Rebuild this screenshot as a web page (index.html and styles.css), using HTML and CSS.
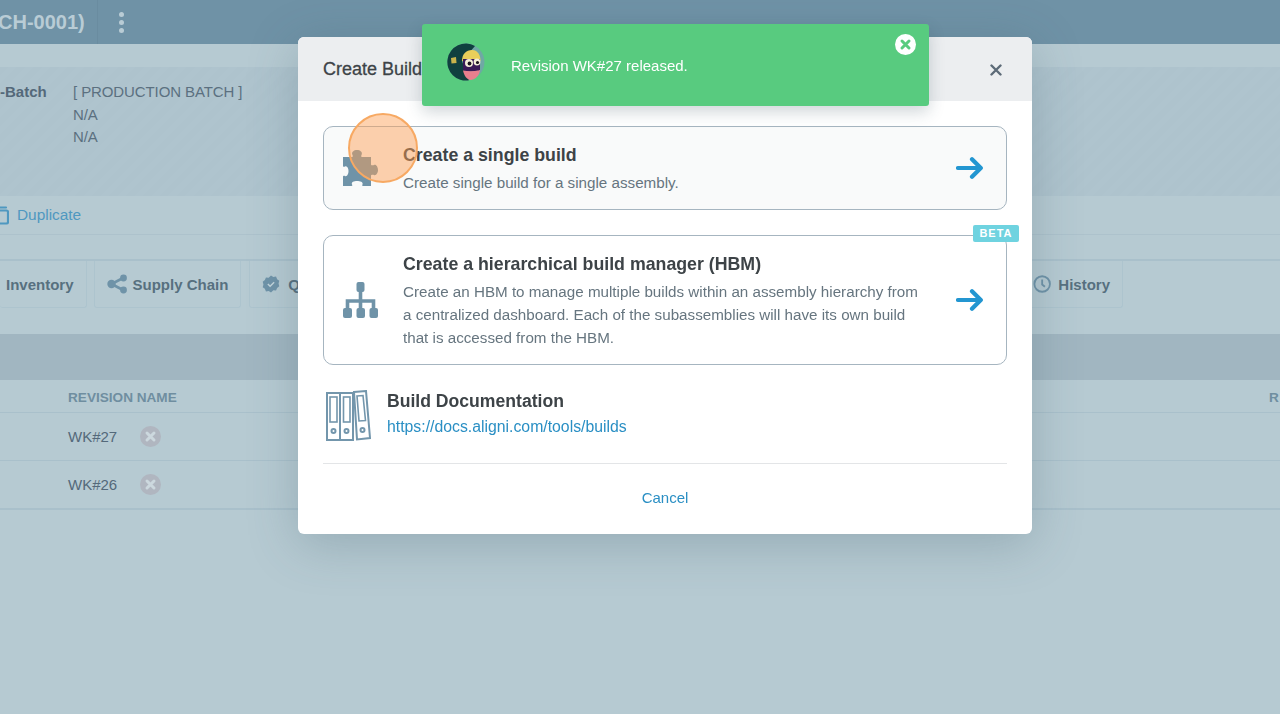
FILE: index.html
```html
<!DOCTYPE html>
<html lang="en">
<head>
    <meta charset="UTF-8">
    <meta name="viewport" content="width=device-width, initial-scale=1.0">
    <link rel="stylesheet" href="styles.css">
    <title>Create Build</title>
</head>
<body>
    <div class="page">
        <header class="topbar">
            <h1 class="part-name">CH-0001)</h1>
            <div class="topbar-menu"><span></span><span></span><span></span></div>
        </header>
        <div class="strip"></div>
        <section class="details">
            <div class="details-label">-Batch</div>
            <div class="details-values">
                <div>[ PRODUCTION BATCH ]</div>
                <div>N/A</div>
                <div>N/A</div>
            </div>
        </section>
        <div class="actions">
            <svg class="duplicate-icon" width="9" height="20" viewBox="4 0 9 20"><path d="M3 2.500h7M1 5.500h9.500a1.500 1.500 0 0 1 1.500 1.500v10a1.500 1.500 0 0 1-1.500 1.500H1" fill="none" stroke="#4f98c0" stroke-width="2.200" stroke-linecap="round"/></svg>
            <a class="duplicate-link">Duplicate</a>
        </div>
        <div class="sub-strip"></div>
        <nav class="tabs">
            <div class="tab tab-first">Inventory</div>
            <div class="tab">
                <svg width="20" height="20" viewBox="0 0 20 20"><path d="M16 4 4.500 10 16 16" fill="none" stroke="#6f93a8" stroke-width="2.600"/><circle cx="16.500" cy="4" r="3.400" fill="#6f93a8"/><circle cx="16.500" cy="16" r="3.400" fill="#6f93a8"/><circle cx="4.500" cy="10" r="4.200" fill="#6f93a8"/></svg>
                Supply Chain
            </div>
            <div class="tab tab-quality">
                <svg width="18" height="18" viewBox="0 0 20 20"><path d="M10 .5l2.600 1.600 3-.3 1.200 2.800 2.400 1.900-.8 3 .8 3-2.400 1.900-1.200 2.800-3-.3L10 19.500l-2.600-1.600-3 .3-1.200-2.800L.8 13.500l.8-3-.8-3 2.400-1.900 1.200-2.800 3 .3z" fill="#6f93a8"/><path d="M6.500 10l2.500 2.500 4.500-4.500" fill="none" stroke="#c4d5dc" stroke-width="1.600"/></svg>
                Quality
            </div>
            <div class="tab tab-history">
                <svg width="20" height="20" viewBox="0 0 20 20"><circle cx="10" cy="10" r="8.500" fill="none" stroke="#6f93a8" stroke-width="2"/><path d="M10 5v5.500l3 2.500" fill="none" stroke="#6f93a8" stroke-width="2"/></svg>
                History
            </div>
        </nav>
        <div class="table-bar"></div>
        <div class="table-row table-head">
            <div></div>
            <div>REVISION NAME</div>
            <div>R</div>
        </div>
        <div class="table-row">
            <div></div>
            <div class="revision">
                WK#27
                <svg width="21" height="21" viewBox="0 0 21 21"><circle cx="10.500" cy="10.500" r="10.500" fill="#b0b6c0"/><path d="M7 7l7 7M14 7l-7 7" stroke="#ccd8de" stroke-width="3" stroke-linecap="round"/></svg>
            </div>
        </div>
        <div class="table-row table-row-last">
            <div></div>
            <div class="revision">
                WK#26
                <svg width="21" height="21" viewBox="0 0 21 21"><circle cx="10.500" cy="10.500" r="10.500" fill="#b0b6c0"/><path d="M7 7l7 7M14 7l-7 7" stroke="#ccd8de" stroke-width="3" stroke-linecap="round"/></svg>
            </div>
        </div>
    </div>

    <div class="modal">
        <div class="modal-header">
            <div class="modal-title">Create Build</div>
            <svg class="modal-close" width="12" height="12" viewBox="0 0 12 12"><path d="M1.500 1.500l9 9M10.500 1.500l-9 9" stroke="#5d6b78" stroke-width="2.400" stroke-linecap="round"/></svg>
        </div>
        <div class="modal-body">
            <div class="option option-single">
                <svg class="option-icon" width="35" height="36" viewBox="0 0 35 36"><path d="M0 7H9C10 7 10 6 9.500 5C8 2 11 0 14 0C17 0 20 2 18.500 5C18 6 18 7 19 7H28V14.500C28 15.500 30 15.500 31 15C33 14 35 17 35 20C35 23 33 26 31 25C30 24.500 28 24.500 28 25.500V36H20C19 36 19 35 19.500 34.500C20.500 32 17 31 14 31C11 31 8 32 9 34.500C9.500 35 9.500 36 8.500 36H0V26.500C0 25.500 1.500 25.500 2 26C4 27 5.500 24 5.500 21C5.500 18 4 15.500 2 16.500C1.500 17 0 17 0 16Z" fill="#6f93a8"/></svg>
                <div class="option-text">
                    <div class="option-title">Create a single build</div>
                    <div class="option-desc">Create single build for a single assembly.</div>
                </div>
                <svg class="option-arrow" width="28" height="24" viewBox="0 0 28 24"><path d="M2 12h22.500M16 3.200 24.800 12 16 20.800" fill="none" stroke="#2396d1" stroke-width="4.200" stroke-linecap="round" stroke-linejoin="round"/></svg>
            </div>
            <div class="option option-hbm">
                <span class="beta">BETA</span>
                <svg class="option-icon" width="35" height="36" viewBox="0 0 35 36"><rect x="13.500" y="0" width="8" height="10" rx="2" fill="#6f93a8"/><rect x="0" y="26" width="9" height="10" rx="2" fill="#6f93a8"/><rect x="13.500" y="26" width="8.500" height="10" rx="2" fill="#6f93a8"/><rect x="26.500" y="26" width="8.500" height="10" rx="2" fill="#6f93a8"/><path d="M17.500 9v18M4.500 27v-8h26v8" fill="none" stroke="#6f93a8" stroke-width="3.600"/></svg>
                <div class="option-text">
                    <div class="option-title">Create a hierarchical build manager (HBM)</div>
                    <div class="option-desc">Create an HBM to manage multiple builds within an assembly hierarchy from a centralized dashboard. Each of the subassemblies will have its own build that is accessed from the HBM.</div>
                </div>
                <svg class="option-arrow" width="28" height="24" viewBox="0 0 28 24"><path d="M2 12h22.500M16 3.200 24.800 12 16 20.800" fill="none" stroke="#2396d1" stroke-width="4.200" stroke-linecap="round" stroke-linejoin="round"/></svg>
            </div>
            <div class="docs">
                <svg class="docs-icon" width="45" height="51" viewBox="0 0 45 51" fill="none" stroke="#7396ac" stroke-width="2">
                    <rect x="1" y="3" width="13" height="47"/>
                    <rect x="14" y="3" width="13" height="47"/>
                    <path d="M28 2 40 1l4 47-13 1.500z"/>
                    <rect x="4" y="7" width="7" height="25" stroke-width="1.600"/>
                    <rect x="17.500" y="7" width="6.500" height="25" stroke-width="1.600"/>
                    <path d="M31 6l6-.5 2.500 25-6.500.5z" stroke-width="1.600"/>
                    <circle cx="7.500" cy="41" r="2"/>
                    <circle cx="20.500" cy="41" r="2"/>
                    <circle cx="36.500" cy="40" r="2"/>
                </svg>
                <div>
                    <div class="docs-title">Build Documentation</div>
                    <a class="docs-link">https://docs.aligni.com/tools/builds</a>
                </div>
            </div>
            <div class="modal-footer"><a class="cancel">Cancel</a></div>
        </div>
    </div>

    <div class="toast">
        <svg class="toast-avatar" width="38" height="38" viewBox="0 0 38 38">
            <circle cx="19" cy="19" r="18.500" fill="#6fa8a4"/>
            <path d="M28 3A18.500 18.500 0 1 0 22 37.300L15 18z" fill="#10403f"/>
            <path d="M15 18c0-7 4-11 10-11 5 0 8.500 4 8.500 11z" fill="#e9cf5a"/>
            <path d="M16 16h17v11c-2 2-14 2-17 0z" fill="#3a1b57"/>
            <path d="M16 27.500c5 1 12 1 17-.5-.5 5-4 9.500-9 10-4 0-7-4.500-8-9.500z" fill="#e87f8e"/>
            <circle cx="22" cy="20" r="4" fill="#f4efd8"/>
            <circle cx="30" cy="19" r="3.400" fill="#f4efd8"/>
            <circle cx="22.500" cy="20.500" r="1.900" fill="#1c1420"/>
            <circle cx="30.500" cy="19.500" r="1.600" fill="#1c1420"/>
            <path d="M4 15l5-1 .5 6-5 .5z" fill="#c9b34c"/>
        </svg>
        <div class="toast-text">Revision WK#27 released.</div>
        <svg class="toast-close" width="21" height="21" viewBox="0 0 21 21"><circle cx="10.500" cy="10.500" r="10.500" fill="#fff"/><path d="M7 7l7 7M14 7l-7 7" stroke="#58cb7f" stroke-width="3" stroke-linecap="round"/></svg>
    </div>

    <div class="click-marker"></div>
</body>
</html>
```

FILE: styles.css
```css
* {
    box-sizing: border-box;
}

html, body {
    margin: 0;
    height: 714px;
    overflow: hidden;
}

body {
    background: #b6cad2;
    font-family: "Liberation Sans", Arial, sans-serif;
    font-size: 15px;
    color: #54697a;
}

.page {
    width: 1280px;
}

.topbar {
    height: 44px;
    background: #6f92a6;
    display: flex;
    align-items: center;
}

.part-name {
    margin: 0 0 0 -2px;
    font-size: 20px;
    color: #b9ccd5;
    width: 100px;
    height: 44px;
    line-height: 44px;
    border-right: 1px solid #6a8ca0;
}

.topbar-menu {
    margin-left: 21px;
    display: flex;
    flex-direction: column;
    gap: 3px;
}

.topbar-menu span {
    width: 5px;
    height: 5px;
    border-radius: 50%;
    background: #b9ccd5;
}

.strip {
    height: 23px;
    background: #b6cad2;
}

.details {
    height: 129px;
    padding-top: 14px;
    display: flex;
    background: repeating-linear-gradient(135deg, #aec3cd 0 6px, #afc4ce 6px 12px);
    line-height: 22.500px;
}

.details-label {
    width: 73px;
    font-weight: bold;
}

.details-values {
    color: #5b7080;
    letter-spacing: -0.1px;
}

.actions {
    height: 39px;
    border-bottom: 1px solid #adc2cc;
    display: flex;
    align-items: center;
}

.duplicate-icon {
    margin-right: 8px;
}

.duplicate-link {
    color: #4f98c0;
    font-size: 15.400px;
}

.sub-strip {
    height: 26px;
    border-bottom: 2px solid #a9c0cb;
}

.tabs {
    height: 47px;
    width: 1123px;
    display: flex;
    gap: 7px;
}

.tab {
    height: 47px;
    padding: 0 12px;
    display: flex;
    align-items: center;
    gap: 6px;
    font-weight: bold;
    color: #57707f;
    border: 1px solid #adc4ce;
    border-top: 0;
    border-radius: 0 0 3px 3px;
}

.tab-first {
    padding: 0 12px 0 6px;
    border-left: 0;
}

.tab-quality {
    width: 200px;
    gap: 8px;
    margin-left: 1px;
}

.tab-history {
    margin-left: auto;
    padding-left: 9px;
    width: 100px;
    gap: 7px;
}

.table-bar {
    height: 46px;
    margin-top: 26px;
    background: #a1b6c1;
}

.table-row {
    display: grid;
    grid-template-columns: 68px 1201px 11px;
    height: 48px;
    align-items: center;
    border-bottom: 1px solid #a9c0cb;
}

.table-head {
    height: 33px;
    padding-top: 2px;
    font-size: 13.600px;
    font-weight: bold;
    color: #6f8ea0;
}

.table-row-last {
    height: 49px;
    border-bottom: 2px solid #a9c0cb;
}

.revision {
    display: flex;
    align-items: center;
    gap: 23px;
    padding-bottom: 1px;
}

/* dialog on top of the page */
.modal {
    position: fixed;
    top: 37px;
    left: 298px;
    width: 734px;
    height: 497px;
    background: #fff;
    border-radius: 6px;
    box-shadow: 0 10px 50px rgba(60, 90, 105, 0.28);
}

.modal-header {
    height: 64px;
    padding: 0 30px 0 25px;
    background: #eceef0;
    border-radius: 6px 6px 0 0;
    display: flex;
    align-items: center;
    justify-content: space-between;
}

.modal-title {
    font-size: 18px;
    color: #3d4347;
    -webkit-text-stroke: 0.3px #3d4347;
}

.modal-close {
    margin-top: 2px;
}

.modal-body {
    padding: 25px 25px 0;
}

.option {
    position: relative;
    display: flex;
    align-items: center;
    border: 1px solid #a6b5c0;
    border-radius: 10px;
    padding: 0 22px 0 19px;
}

.option-single {
    height: 84px;
    background: #f9fafa;
    margin-bottom: 25px;
}

.option-hbm {
    height: 130px;
}

.option-icon {
    flex: none;
    margin-right: 25px;
}

.option-text {
    flex: 1;
}

.option-title {
    font-size: 17.750px;
    font-weight: bold;
    color: #3d4347;
    line-height: 24px;
    margin-bottom: 4px;
}

.option-desc {
    font-size: 15.200px;
    line-height: 23px;
    color: #66757f;
    max-width: 525px;
}

.option-arrow {
    flex: none;
    margin-left: 20px;
}

.beta {
    position: absolute;
    top: -11px;
    right: -13px;
    width: 46px;
    height: 17px;
    background: #6fd3e0;
    color: #fff;
    font-size: 11px;
    font-weight: bold;
    letter-spacing: 1px;
    text-align: center;
    line-height: 17px;
    border-radius: 2px;
}

.docs {
    display: flex;
    gap: 16px;
    margin: 25px 0 0 3px;
    height: 51px;
}

.docs-title {
    font-size: 17.600px;
    font-weight: bold;
    color: #3d4347;
    line-height: 22px;
    margin-bottom: 4px;
}

.docs-link {
    display: block;
    color: #2a8fc4;
    font-size: 15.800px;
    line-height: 22px;
}

.modal-footer {
    margin-top: 22px;
    border-top: 1px solid #e3e5e7;
    text-align: center;
    padding-top: 25px;
}

.cancel {
    color: #2a8fc4;
}

/* green notification */
.toast {
    position: fixed;
    top: 24px;
    left: 422px;
    width: 507px;
    height: 82px;
    background: #58cb7f;
    border-radius: 3px;
    box-shadow: 0 6px 16px rgba(40, 70, 80, 0.22);
    display: flex;
    align-items: center;
    padding-left: 25px;
}

.toast-avatar {
    margin: -7px 26px 0 0;
    flex: none;
}

.toast-text {
    color: #fff;
    font-size: 15px;
}

.toast-close {
    position: absolute;
    top: 10px;
    right: 13px;
}

/* orange tutorial click marker */
.click-marker {
    position: fixed;
    left: 348px;
    top: 113px;
    width: 70px;
    height: 70px;
    border-radius: 50%;
    background: rgba(252, 160, 85, 0.47);
    border: 2.500px solid #f7a963;
}
```
